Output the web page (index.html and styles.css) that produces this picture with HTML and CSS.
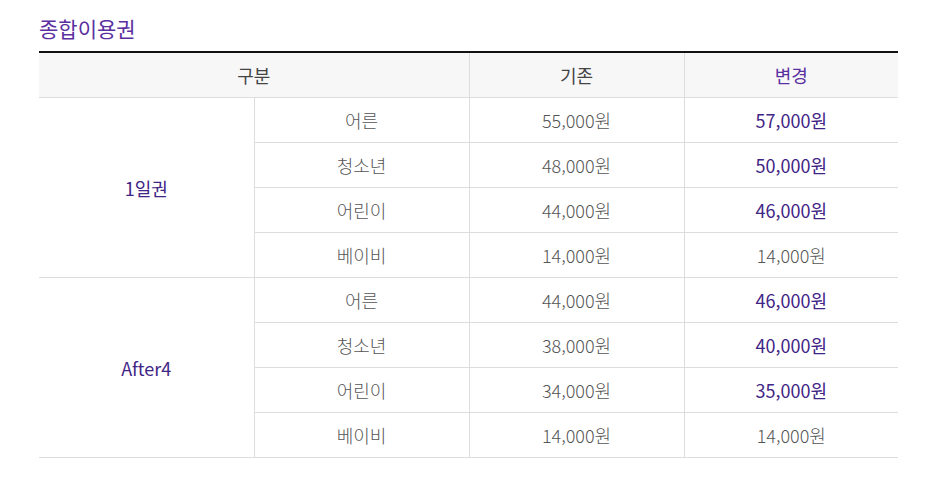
FILE: index.html
```html
<!DOCTYPE html>
<html lang="ko">
<head>
<meta charset="utf-8">
<link rel="stylesheet" href="styles.css">
</head>
<body>
<div class="wrap">
  <h2 class="title">종합이용권</h2>
  <table class="price">
    <colgroup><col class="c1"><col class="c2"><col class="c3"><col class="c4"></colgroup>
    <thead>
      <tr><th colspan="2">구분</th><th>기존</th><th class="pt">변경</th></tr>
    </thead>
    <tbody>
      <tr><td rowspan="4" class="grp">1일권</td><td>어른</td><td>55,000원</td><td class="pt">57,000원</td></tr>
      <tr><td>청소년</td><td>48,000원</td><td class="pt">50,000원</td></tr>
      <tr><td>어린이</td><td>44,000원</td><td class="pt">46,000원</td></tr>
      <tr><td>베이비</td><td>14,000원</td><td>14,000원</td></tr>
      <tr><td rowspan="4" class="grp">After4</td><td>어른</td><td>44,000원</td><td class="pt">46,000원</td></tr>
      <tr><td>청소년</td><td>38,000원</td><td class="pt">40,000원</td></tr>
      <tr><td>어린이</td><td>34,000원</td><td class="pt">35,000원</td></tr>
      <tr><td>베이비</td><td>14,000원</td><td>14,000원</td></tr>
    </tbody>
  </table>
</div>
</body>
</html>
```
FILE: styles.css
```css
html, body { margin: 0; padding: 0; background: #fff; }
body { font-family: "Noto Sans CJK KR", "Noto Sans", sans-serif; }
.wrap { padding: 14px 36px 0 39px; }
.title {
  margin: 0 0 8px 0;
  font-size: 21px;
  line-height: 29px;
  font-weight: 400;
  color: #5a2fa0;
}
.price {
  width: 859px;
  border-collapse: collapse;
  table-layout: fixed;
  border-top: 2px solid #111;
}
.c1 { width: 215px; }
.c2 { width: 215px; }
.c3 { width: 215px; }
.c4 { width: 214px; }
.price th, .price td {
  height: 44px;
  padding: 0;
  text-align: center;
  vertical-align: middle;
  font-size: 18px;
  line-height: 24px;
  font-weight: 300;
  color: #555;
  border-bottom: 1px solid #ddd;
  border-left: 1px solid #ddd;
}
.price th { background: #f7f7f7; color: #444; font-weight: 400; }
.price th:first-child, .price td.grp { border-left: none; }
.price .pt { color: #3f2585; font-weight: 400; }
.price th.pt { color: #5a2fa0; font-weight: 400; }
.price td.grp { color: #3f2585; font-weight: 400; }
```
